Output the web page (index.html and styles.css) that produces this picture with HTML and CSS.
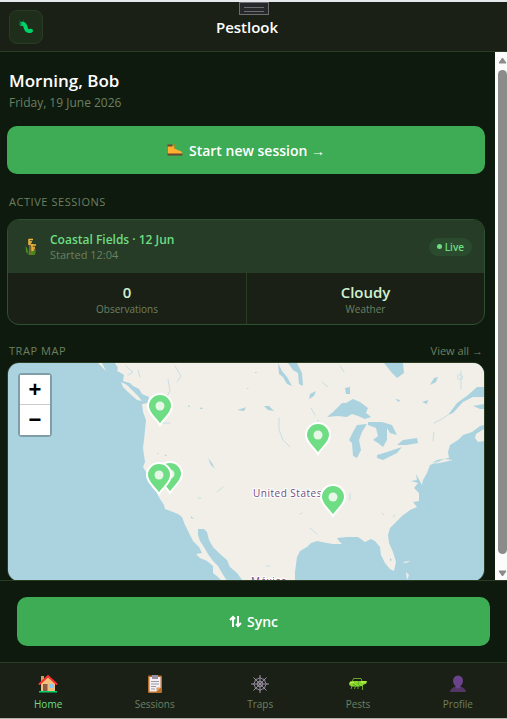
FILE: index.html
```html
<!DOCTYPE html>
<html lang="en">
  <head>
    <meta charset="UTF-8" />
    <meta name="viewport" content="width=device-width, initial-scale=1" />
    <title>Pestlook</title>
    <link rel="stylesheet" href="styles.css">
  </head>
  <body>
    <div class="app">
      <div class="handle" aria-hidden="true"></div>
      <header class="topbar">
        <a class="logo" href="#" aria-label="Pestlook home">
          <svg width="16" height="16" viewBox="0 0 16 16">
            <path d="M3.500 5C7 4 7 7 8 9.500S10 12.500 13 11.800" fill="none" stroke="#00d26a" stroke-width="4" stroke-linecap="round" />
            <path d="M3 3.500L1.500 1.800M4.500 3L5.500 1.500" fill="none" stroke="#008463" stroke-width="1" />
            <circle cx="2.800" cy="5" r=".7" fill="#1c1c1c" />
          </svg>
        </a>
        <span class="brand">Pestlook</span>
      </header>

      <div class="body">
        <main class="content">
          <div class="greeting">
            <h1>Morning, Bob</h1>
            <p>Friday, 19 June 2026</p>
          </div>

          <button class="btn" type="button">
            <svg width="16" height="12" viewBox="0 0 16 12">
              <path d="M1 1.500H6.500L8 5L13.500 7Q15.500 8 15.500 10H1Z" fill="#ffb02e" />
              <path d="M.500 .500H5.500V2.500H.500Z" fill="#6d4534" />
              <path d="M6.500 1H8V2.500M6.500 4H8.500" fill="none" stroke="#d67d00" stroke-width="1" />
              <path d="M.500 9.500H15.500V11.500H.500Z" fill="#6d4534" />
            </svg>
            <span>Start new session →</span>
          </button>

          <section>
            <div class="section-head">
              <h2>Active Sessions</h2>
            </div>
            <div class="card">
              <div class="card-head">
                <svg width="18" height="18" viewBox="0 0 18 18">
                  <path d="M6 17V3M10 17V8" fill="none" stroke="#c88a2d" stroke-width="1" />
                  <path d="M5 1.500H9M5 4H8M7 7H12M8 10H11M5 6H7M8 12H10" fill="none" stroke="#f3b63c" stroke-width="1.500" />
                  <path d="M5 1V7M8 6V13" fill="none" stroke="#f3b63c" stroke-width="1.500" />
                  <path d="M1.500 8Q4 10 4 16L2 14ZM5 9L6.500 17H4.500ZM7 13H9V17H7ZM11.500 10V15L9.500 17Z" fill="#44911b" />
                </svg>
                <div class="session">
                  <h3>Coastal Fields · 12 Jun</h3>
                  <p>Started 12:04</p>
                </div>
                <span class="live">Live</span>
              </div>
              <dl class="stats">
                <div>
                  <dt>Observations</dt>
                  <dd>0</dd>
                </div>
                <div>
                  <dt>Weather</dt>
                  <dd>Cloudy</dd>
                </div>
              </dl>
            </div>
          </section>

          <section>
            <div class="section-head map-head">
              <h2>Trap Map</h2>
              <a href="#">View all →</a>
            </div>
            <div class="map">
              <svg class="map-tiles" viewBox="8 363 476 218" preserveAspectRatio="xMidYMid slice" role="img" aria-label="Map of traps">
                <defs>
                  <g id="pin">
                    <path d="M0 19C-4 12-12 8-12 0A12 12 0 0 1 12 0C12 8 4 12 0 19Z" fill="#6edd83" stroke="#fff" stroke-width="2" />
                    <circle r="4.500" fill="#e6f7e6" />
                  </g>
                </defs>
                <rect x="8" y="363" width="476" height="218" fill="#abd3df" />
                <!-- mainland -->
                <path fill="#f2efe8" d="M115 363L118 368 117 371 121 373 124 375 123 381 130 383 133 386 139 389 142 394 149 397 148 403 142 404 143 412 146 420 145 430 144 440 143 448 144 455 145 462 143 467 146 472 149 479 152 487 157 493 160 499 164 505 165 509 173 512 178 514 182 517 185 525 189 533 193 541 199 547 202 553 196 554 200 558 207 561 213 566 213 573 218 577 222 581H227L222 573 218 566 213 561 208 554 204 547 200 541 198 535 198 529 204 529 207 532 209 540 213 547 220 554 227 560 230 567 237 573 243 581H295V572L297 557 300 551 307 547 311 543 317 541 327 543 333 544 342 544 339 541 337 538 347 537 358 537 365 542 371 539 375 541 380 547 381 555 385 563 390 569 394 571 396 562 393 552 389 543 388 535 390 528 395 523 402 516 410 510 417 507 413 502 419 501 419 493 414 488 418 483 411 481 417 480 416 474 422 485 423 480 427 473 430 465 435 463 443 460 432 463 437 460 449 458 448 452 450 445 458 440 463 435 472 432 480 426 484 425V363Z" />
                <!-- islands and Nova Scotia -->
                <path fill="#f2efe8" d="M121 382L127 385 133 391 138 396 142 401 137 400 128 392 123 387ZM98 363H102L106 371ZM476 434L484 429V441L478 442 475 438ZM406 572L409 575 407 580ZM402 562L411 561 406 563ZM444 459L453 460 435 464Z" />
                <!-- lakes and bays -->
                <g fill="#abd3df">
                  <path d="M327 417L333 412 342 403 346 403 353 399 360 402 368 408 366 413 371 417 365 419 358 416 352 414 347 417 338 416Z" />
                  <path d="M357 425L367 424 362 432 359 440 361 450 357 458 353 456 352 443 349 440 353 432Z" />
                  <path d="M368 422L382 422 392 425 397 435 390 433 387 428 387 440 383 447 378 443 373 440 378 436 376 428 368 425Z" />
                  <path d="M377 455L387 452 402 447 397 453 383 460 377 458Z" />
                  <path d="M397 445L403 440 417 438 418 443 407 445Z" />
                  <path d="M288 363H297L302 373 303 386 299 384 298 373 293 370ZM278 363L282 371 287 377 292 386 287 384 283 377 279 374Z" />
                  <path d="M384 363H403L404 373 397 378 392 373Z" />
                  <path d="M448 415L457 403 468 395 477 387H484V397L473 397 463 402 453 413ZM473 406L484 404V409L480 409Z" />
                  <path d="M345 388L350 387V394L346 394ZM310 394L316 391 314 396 309 399ZM430 385L434 378 438 377 436 382ZM422 402L428 400 427 404ZM395 399L400 400 399 402ZM208 458L212 463 215 469 211 465ZM237 410L244 408 246 407 244 411ZM191 516L194 519 191 518ZM189 405L190 407 188 407ZM201 407L203 409 200 409ZM247 388L249 389H247ZM255 372L258 373H255ZM264 406L269 406 274 411 268 410ZM390 558L392 560 390 561ZM158 453L159 454H157ZM165 454L167 456H165Z" />
                </g>
                <!-- rivers -->
                <g fill="none" stroke="#abd3df" stroke-width="1" stroke-linecap="round" opacity=".6">
                  <path d="M448 415L440 420 434 423M434 432L433 441M279 418V430L283 440 290 447M322 382L328 387M340 366L344 372M461 371V389M310 528L317 534M300 514L302 513M350 493V500M266 566H270M382 513L384 515M394 515V517M198 498H201M217 492L223 487M126 366L133 372 128 375M138 370L140 377M168 379L170 391 165 399M175 366L181 376 177 382M158 423H170M318 420V423M311 408L315 415" />
                  <circle cx="460" cy="377" r="2.500" />
                </g>
                <g class="place">
                  <text x="253" y="497">United States</text>
                  <text x="251" y="585">México</text>
                </g>
                <use href="#pin" x="160" y="406" />
                <use href="#pin" x="318" y="435" />
                <use href="#pin" x="170" y="474" />
                <use href="#pin" x="159" y="475" />
                <use href="#pin" x="333" y="497" />
              </svg>
              <div class="zoom">
                <button type="button" aria-label="Zoom in">+</button>
                <button type="button" aria-label="Zoom out">−</button>
              </div>
            </div>
          </section>
        </main>
        <div class="scrollbar" aria-hidden="true">
          <svg width="9" height="7" viewBox="0 0 9 7"><path d="M4.500 1L8 6H1Z" fill="#8b8b8b" stroke="#8b8b8b" stroke-linejoin="round" /></svg>
          <div class="thumb"></div>
          <svg width="9" height="7" viewBox="0 0 9 7"><path d="M4.500 6L1 1H8Z" fill="#8b8b8b" stroke="#8b8b8b" stroke-linejoin="round" /></svg>
        </div>
      </div>

      <div class="sync-bar">
        <button class="btn sync" type="button">
          <svg width="13" height="13" viewBox="0 0 13 13">
            <path d="M4 12V2M1 5L4 2L6 4M9 1V11M7 9L9 11L12 8" fill="none" stroke="#fff" stroke-width="2" />
          </svg>
          <span>Sync</span>
        </button>
      </div>

      <nav class="tabs">
        <a class="active" href="#">
          <svg width="20" height="20" viewBox="0 0 20 20">
            <path d="M3 2H6V7H3Z" fill="#d39a5c" />
            <path d="M3 9L10 3L17 9V18H3Z" fill="#f3c07b" />
            <path d="M1.500 10L10 2L18.500 10" fill="none" stroke="#f8312f" stroke-width="2" stroke-linecap="round" />
            <path d="M5 10H9.500V18H5Z" fill="#8d5b46" />
            <path d="M11.500 10H16V14H11.500Z" fill="#83cbff" />
            <path d="M1 17H19V18.500H1Z" fill="#00d26a" />
          </svg>
          Home
        </a>
        <a href="#">
          <svg width="20" height="20" viewBox="0 0 20 20">
            <rect x="3" y="1.500" width="14" height="17.500" rx="1" fill="#b97028" />
            <path d="M4.500 3H15.500V13.500L11.500 17.500H4.500Z" fill="#f3eef8" />
            <path d="M11.500 17.500V13.500H15.500Z" fill="#e39d54" />
            <path d="M7 1H13V5H7Z" fill="#998ea4" />
            <path d="M6 7.500H14M6 10H14M6 12.500H11M6 15H10" stroke="#9b9b9b" stroke-width="1" />
          </svg>
          Sessions
        </a>
        <a href="#">
          <svg width="20" height="20" viewBox="0 0 20 20">
            <g fill="none" stroke="#998ea4" stroke-width="1">
              <path d="M10 1V19M1 10H19M3.500 3.500L16.500 16.500M16.500 3.500L3.500 16.500" />
              <path d="M10 3.500Q12 5.500 14.600 5.400Q14.500 8 16.500 10Q14.500 12 14.600 14.600Q12 14.500 10 16.500Q8 14.500 5.400 14.600Q5.500 12 3.500 10Q5.500 8 5.400 5.400Q8 5.500 10 3.500Z" />
              <path d="M10 7L12 8L13 10L12 12L10 13L8 12L7 10L8 8Z" />
            </g>
          </svg>
          Traps
        </a>
        <a href="#">
          <svg width="20" height="20" viewBox="0 0 20 20">
            <path d="M4.500 7L5.500 4.500H13L14 7M4 12L3 15M7.500 12L6.500 15M10 12V15M14.500 10V16" fill="none" stroke="#6ba32b" stroke-width="1" />
            <path d="M1 9Q2 7 5 7H19Q19 10 16 10.500Q14 13 10 12.500H4Q1 12 1 9Z" fill="#86d72f" />
            <path d="M6 7L5 10L8 12M11 7L10 10L12 12" fill="none" stroke="#5fa81f" stroke-width="1" />
            <path d="M2 8.500H6M13 8H18" stroke="#c3ef3c" stroke-width="1.500" />
          </svg>
          Pests
        </a>
        <a href="#">
          <svg width="20" height="20" viewBox="0 0 20 20">
            <path d="M2 18Q2.500 13.500 8 12.500H12Q17.500 13.500 18 18Z" fill="#533566" />
            <path d="M10 1.500Q15 2 15 7Q15 10 12.500 12V13.500Q10 15.500 7.500 13.500V12Q5 10 5 7Q5 2 10 1.500Z" fill="#6b438b" />
          </svg>
          Profile
        </a>
      </nav>
    </div>
  </body>
</html>
```
FILE: styles.css
```css
:root {
  --bg: #0f1a0e;
  --bg-bar: #1a2016;
  --bg-head: #263c26;
  --line: #2a3c22;
  --line-card: #2c5030;
  --green: #3dac54;
  --green-light: #6edd83;
  --muted: #6b8060;
  --text: #fff;
  --radius: 12px;
}

* {
  box-sizing: border-box;
}

body,
h1,
h2,
h3,
p,
dl,
dd {
  margin: 0;
}

body {
  font-family: "Segoe UI", "Open Sans", sans-serif;
  background: var(--bg);
  color: var(--text);
}

a {
  color: inherit;
  text-decoration: none;
}

button {
  font-family: inherit;
  border: none;
  cursor: pointer;
}

.app {
  position: relative;
  display: flex;
  flex-direction: column;
  height: 100vh;
  border-top: 2px solid #e6e9ec;
  border-bottom: 1px solid #b4b6b2;
}

/* Drag handle over the header */
.handle {
  position: absolute;
  top: 0;
  left: 50%;
  width: 30px;
  height: 13px;
  padding: 4px;
  transform: translateX(-50%);
  background: #27282a;
  border: 1px solid #6c6d6e;
}

.handle::before {
  content: "";
  display: block;
  height: 3px;
  border: solid #6c6d6e;
  border-width: 1px 0;
}

/* Header */
.topbar {
  display: grid;
  grid-template-columns: 34px 1fr 34px;
  align-items: center;
  height: 50px;
  padding: 0 22px 0 9px;
  background: var(--bg-bar);
  border-bottom: 1px solid var(--line);
}

.logo {
  display: grid;
  place-items: center;
  height: 34px;
  background: #1f2d1b;
  border: 1px solid #293c25;
  border-radius: 8px;
}

.brand {
  font-size: 15px;
  font-weight: 600;
  text-align: center;
}

/* Scrolling part */
.body {
  display: flex;
  flex: 1;
  min-height: 0;
}

.content {
  flex: 1;
  overflow: hidden;
  padding: 16px 10px 0 7px;
}

.greeting {
  padding: 0 2px;
}

h1 {
  font-size: 17px;
  font-weight: 600;
  line-height: 26px;
}

.greeting p {
  font-size: 12px;
  line-height: 18px;
  color: var(--muted);
}

.btn {
  display: flex;
  align-items: center;
  justify-content: center;
  gap: 6px;
  width: 100%;
  height: 48px;
  font-size: 14px;
  font-weight: 600;
  color: #fff;
  background: var(--green);
  border-radius: 10px;
}

.content .btn {
  margin: 14px 0 19px;
}

.section-head {
  display: flex;
  align-items: center;
  justify-content: space-between;
  height: 16px;
  margin-bottom: 10px;
  padding: 0 2px;
}

.map-head {
  margin: 17px 0 4px;
}

h2 {
  font-size: 11px;
  font-weight: 500;
  letter-spacing: 0.05em;
  text-transform: uppercase;
  color: var(--muted);
}

.section-head a {
  font-size: 11px;
  color: var(--muted);
}

/* Session card */
.card {
  overflow: hidden;
  background: var(--bg-bar);
  border: 1px solid var(--line-card);
  border-radius: var(--radius);
}

.card-head {
  display: flex;
  align-items: center;
  gap: 8px;
  height: 53px;
  padding: 0 12px 0 16px;
  background: var(--bg-head);
}

.session {
  flex: 1;
}

h3 {
  font-size: 12px;
  font-weight: 600;
  line-height: 16px;
  color: var(--green-light);
}

.session p {
  font-size: 11px;
  line-height: 14px;
  color: var(--muted);
}

.live {
  display: flex;
  align-items: center;
  gap: 3px;
  height: 18px;
  padding: 0 8px;
  font-size: 10px;
  font-weight: 600;
  color: var(--green-light);
  background: #2b4b2e;
  border-radius: 9px;
}

.live::before {
  content: "";
  width: 5px;
  height: 5px;
  border-radius: 50%;
  background: var(--green-light);
}

.stats {
  display: grid;
  grid-template-columns: 1fr 1fr;
  text-align: center;
}

.stats div {
  display: flex;
  flex-direction: column-reverse;
  padding: 9px 0 8px;
}

.stats div + div {
  border-left: 1px solid var(--line);
}

dt {
  font-size: 10px;
  line-height: 14px;
  color: var(--muted);
}

dd {
  font-size: 15px;
  font-weight: 600;
  line-height: 20px;
  color: #d2f0cf;
}

/* Map */
.map {
  position: relative;
  height: 220px;
  overflow: hidden;
  border: 1px solid var(--line);
  border-radius: var(--radius);
}

.map-tiles {
  display: block;
  width: 100%;
  height: 100%;
}

.place {
  font-size: 10px;
  letter-spacing: 0.05em;
  fill: #734a78;
  stroke: #fff;
  stroke-width: 2px;
  paint-order: stroke;
}

.zoom {
  position: absolute;
  top: 10px;
  left: 10px;
  display: flex;
  flex-direction: column;
  border: 2px solid rgba(0, 0, 0, 0.25);
  border-radius: 4px;
  background-clip: padding-box;
}

.zoom button {
  width: 30px;
  height: 30px;
  padding: 0;
  font: bold 22px/30px "Liberation Sans", sans-serif;
  color: #000;
  background: #fff;
}

.zoom button:first-child {
  border-bottom: 1px solid #ccc;
}

/* Scrollbar */
.scrollbar {
  display: flex;
  flex-direction: column;
  align-items: flex-end;
  gap: 6px;
  width: 12px;
  padding: 5px 0 3px;
  background: #fcfcfc;
}

.thumb {
  flex: 1;
  width: 9px;
  margin-bottom: 10px;
  background: #8b8b8b;
  border-radius: 5px;
}

/* Bottom bars */
.sync-bar {
  padding: 16px 17px;
  border-top: 1px solid var(--line);
}

.sync {
  gap: 5px;
  height: 49px;
}

.tabs {
  display: flex;
  justify-content: space-between;
  height: 56px;
  padding: 11px 34px 0;
  background: var(--bg-bar);
  border-top: 1px solid var(--line);
}

.tabs a {
  display: flex;
  flex-direction: column;
  align-items: center;
  gap: 2px;
  font-size: 10px;
  line-height: 16px;
  color: var(--muted);
}

.tabs .active {
  color: var(--green-light);
}
```
